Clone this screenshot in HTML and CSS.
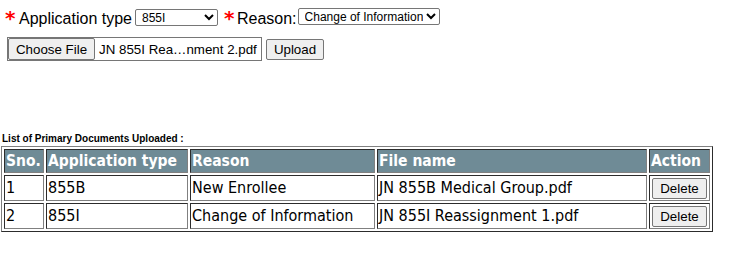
FILE: index.html
```html
<!DOCTYPE html>
<html>
<head>
<meta charset="utf-8">
<link rel="stylesheet" href="styles.css">
</head>
<body>
<div class="form">
  <div class="row row-fields">
    <span class="req">*</span>
    <span class="lbl lbl-type">Application type</span>
    <select class="sel sel-type"><option>855I</option></select>
    <span class="req req-2">*</span>
    <span class="lbl lbl-reason">Reason:</span>
    <select class="sel sel-reason"><option>Change of Information</option></select>
  </div>
  <div class="row row-upload">
    <div class="file">
      <button class="btn btn-choose" type="button">Choose File</button>
      <span class="fname">JN 855I Rea…nment 2.pdf</span>
    </div>
    <button class="btn btn-upload" type="button">Upload</button>
  </div>
</div>
<div class="docs">
  <div class="caption">List of Primary Documents Uploaded :</div>
  <table class="grid">
    <colgroup>
      <col class="c-sno"><col class="c-type"><col class="c-reason"><col class="c-file"><col class="c-action">
    </colgroup>
    <thead>
      <tr><th>Sno.</th><th>Application type</th><th>Reason</th><th>File name</th><th>Action</th></tr>
    </thead>
    <tbody>
      <tr><td>1</td><td>855B</td><td>New Enrollee</td><td>JN 855B Medical Group.pdf</td><td class="act"><button class="btn btn-del" type="button">Delete</button></td></tr>
      <tr><td>2</td><td>855I</td><td>Change of Information</td><td>JN 855I Reassignment 1.pdf</td><td class="act"><button class="btn btn-del" type="button">Delete</button></td></tr>
    </tbody>
  </table>
</div>
</body>
</html>
```
FILE: styles.css
```css
html, body {
  margin: 0;
  padding: 0;
  background: #ffffff;
}
body {
  font-family: "Liberation Sans", Arial, sans-serif;
  color: #000;
}
.form {
  padding: 9px 0 0 5px;
}
.row {
  display: flex;
  align-items: center;
}
.row-fields {
  height: 17px;
  align-items: flex-start;
}
.req {
  color: #ff0000;
  font-family: "DejaVu Sans", sans-serif;
  font-weight: bold;
  font-size: 20px;
  line-height: 18px;
  width: 14px;
  height: 17px;
}
.req-2 {
  margin-left: 6px;
  width: 13px;
}
.lbl {
  font-size: 16px;
  line-height: 19px;
}
.lbl-type {
  margin-right: 3px;
}
.lbl-reason {
  margin-right: 1px;
}
.sel {
  font-family: "Liberation Sans", Arial, sans-serif;
  font-size: 12px;
  height: 17px;
  padding: 0 0 0 2px;
  border: 1px solid #767676;
  border-radius: 2px;
  background: #fff;
  color: #000;
  box-sizing: border-box;
  margin: 0;
}
.sel-type {
  width: 83px;
}
.sel-reason {
  width: 142px;
  margin-top: -1px;
}
.row-upload {
  margin-top: 11px;
  margin-left: 2px;
}
.file {
  display: flex;
  align-items: center;
  border: 1px solid #767676;
  height: 24px;
  box-sizing: border-box;
  width: 255px;
}
.btn {
  font-family: "Liberation Sans", Arial, sans-serif;
  font-size: 13.33px;
  background: #efefef;
  border: 1px solid #767676;
  border-radius: 2px;
  color: #000;
  padding: 0 6px;
  height: 21px;
  box-sizing: border-box;
  margin: 0;
}
.btn-choose {
  width: 87px;
  height: 22px;
  margin-right: 4px;
}
.fname {
  font-size: 13.33px;
  white-space: nowrap;
}
.btn-upload {
  margin-left: 4px;
  width: 58px;
}
.docs {
  margin-top: 72px;
  padding-left: 1px;
}
.caption {
  font-size: 10px;
  font-weight: bold;
  line-height: 12px;
  padding-left: 1px;
  margin-bottom: 1px;
}
.grid {
  border: 1px outset #808080;
  border-spacing: 2px;
  table-layout: fixed;
  width: 710px;
  font-family: "DejaVu Sans Condensed", "DejaVu Sans", sans-serif;
  font-size: 16px;
}
.c-sno { width: 40px; }
.c-type { width: 142px; }
.c-reason { width: 185px; }
.c-file { width: 270px; }
.c-action { width: 61px; }
.grid th, .grid td {
  border: 1px inset #808080;
  padding: 0 1px;
  text-align: left;
  white-space: nowrap;
  overflow: hidden;
}
.grid th {
  background: #6f8b96;
  color: #ffffff;
  font-weight: bold;
  height: 22px;
  line-height: 22px;
  font-size: 15.5px;
}
.grid td {
  height: 24px;
  line-height: 24px;
  color: #000;
}
.grid td.act {
  padding: 0 2px;
  text-align: center;
}
.btn-del {
  width: 55px;
  vertical-align: middle;
}
```
